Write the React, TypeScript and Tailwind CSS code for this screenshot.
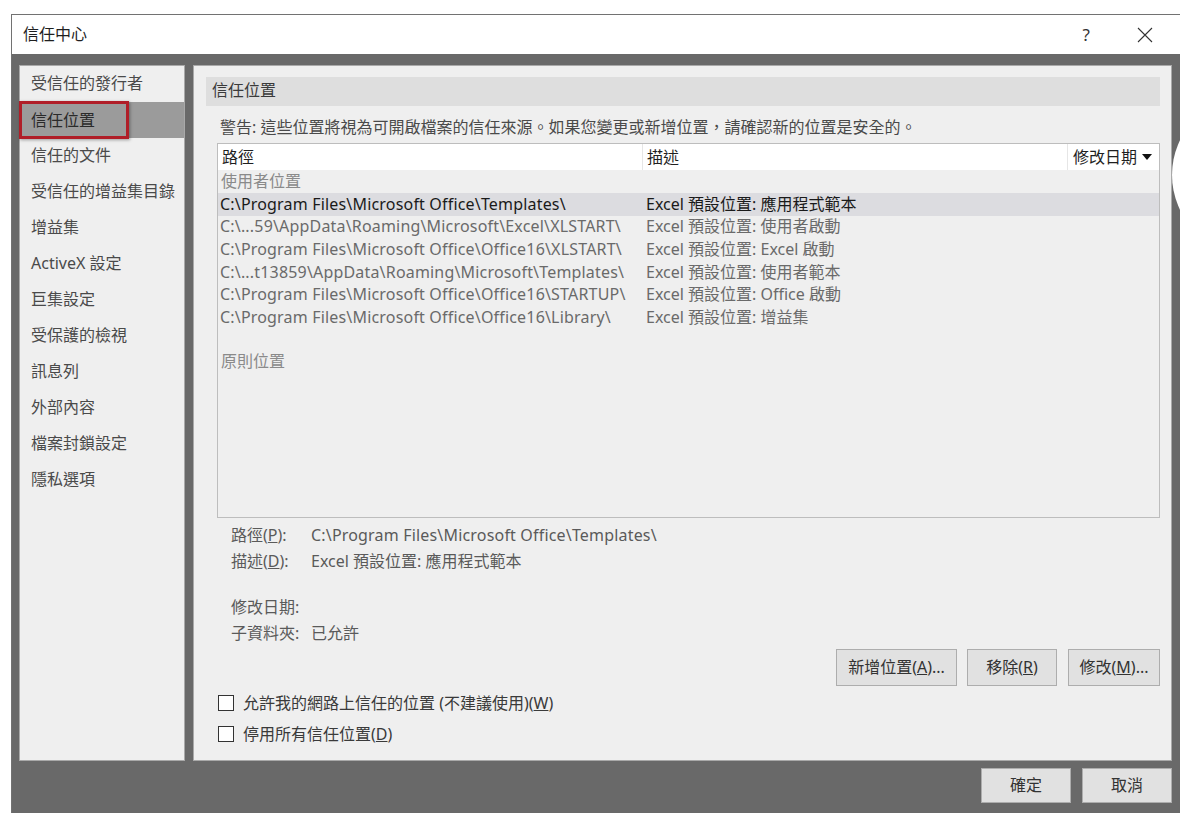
import React from 'react';

const navItems = [
  '受信任的發行者',
  '信任位置',
  '信任的文件',
  '受信任的增益集目錄',
  '增益集',
  'ActiveX 設定',
  '巨集設定',
  '受保護的檢視',
  '訊息列',
  '外部內容',
  '檔案封鎖設定',
  '隱私選項',
];

const userLocations = [
  ['C:\\Program Files\\Microsoft Office\\Templates\\', 'Excel 預設位置: 應用程式範本'],
  ['C:\\...59\\AppData\\Roaming\\Microsoft\\Excel\\XLSTART\\', 'Excel 預設位置: 使用者啟動'],
  ['C:\\Program Files\\Microsoft Office\\Office16\\XLSTART\\', 'Excel 預設位置: Excel 啟動'],
  ['C:\\...t13859\\AppData\\Roaming\\Microsoft\\Templates\\', 'Excel 預設位置: 使用者範本'],
  ['C:\\Program Files\\Microsoft Office\\Office16\\STARTUP\\', 'Excel 預設位置: Office 啟動'],
  ['C:\\Program Files\\Microsoft Office\\Office16\\Library\\', 'Excel 預設位置: 增益集'],
];

function Checkbox({ children }: { children: React.ReactNode }) {
  return (
    <div className="flex items-center h-[20px] ml-[24px]">
      <div className="w-[16px] h-[16px] border border-[#333333] bg-white" />
      <span className="ml-[9px] -mt-[1px] text-[#3a3a3a]">{children}</span>
    </div>
  );
}

function GreyButton({ children, className = '' }: { children: React.ReactNode; className?: string }) {
  return (
    <button className={`flex items-center justify-center bg-[#e1e1e1] border border-[#adadad] text-[#333333] pb-[1px] ${className}`}>
      {children}
    </button>
  );
}

export default function App() {
  return (
    <div className="w-[1180px] h-[817px] bg-white overflow-hidden relative font-['Noto_Sans','Noto_Sans_CJK_TC',sans-serif] text-[16px] leading-none">
      <div className="mt-[14px] ml-[11px] w-[1169px] border-t border-l border-[#727272] flex flex-col">
        {/* Title bar */}
        <div className="h-[39px] bg-white flex items-center pl-[11px] pr-[22px]">
          <span className="text-[#1f1f1f] -mt-[1px]">信任中心</span>
          <div className="flex-1" />
          <span className="text-[#333333] text-[17px] mr-[47px]">?</span>
          <svg width="16" height="16" viewBox="0 0 16 16" className="mr-[5px]">
            <path d="M1 1 L15 15 M15 1 L1 15" stroke="#333" strokeWidth="1.1" fill="none" />
          </svg>
        </div>

        {/* Body */}
        <div className="bg-[#696969] pt-[11px] pl-[7px] pr-[8px] pb-[10px] flex flex-col">
          <div className="flex gap-[8px] h-[696px]">
            {/* Left nav */}
            <div className="w-[166px] bg-[#efefef] border border-[#a9a9a9] flex flex-col">
              {navItems.map((item) =>
                item === '信任位置' ? (
                  <div key={item} className="h-[36px] bg-[#9b9b9b] flex items-center">
                    <div className="w-[110px] h-[38px] -ml-[1px] border-[3px] border-[#b01e28] shadow-[1px_1px_3px_rgba(0,0,0,0.35)] flex items-center pl-[9px] text-[#2a2a2a]">
                      {item}
                    </div>
                  </div>
                ) : (
                  <div key={item} className="h-[36px] flex items-center pl-[11px] pb-[2px] text-[#4a4a4a]">
                    {item}
                  </div>
                )
              )}
            </div>

            {/* Right content */}
            <div className="flex-1 bg-[#efefef] border border-[#a9a9a9] flex flex-col">
              <div className="mt-[11px] ml-[12px] mr-[11px] h-[29px] bg-[#dedede] flex items-center pl-[6px] pb-[3px] text-[#3a3a3a]">
                信任位置
              </div>
              <div className="mt-[10px] h-[22px] ml-[26px] flex items-center pb-[1px] text-[#4a4a4a]">
                警告: 這些位置將視為可開啟檔案的信任來源。如果您變更或新增位置，請確認新的位置是安全的。
              </div>

              {/* Table */}
              <div className="mt-[5px] ml-[23px] mr-[11px] h-[375px] border border-[#bdbdbd] bg-[#efefef] flex flex-col">
                <div className="h-[26px] bg-white flex">
                  <div className="w-[425px] border-r border-[#e6e6e6] flex items-center pl-[4px] pb-[1px] text-[#1f1f1f]">路徑</div>
                  <div className="w-[425px] border-r border-[#e6e6e6] flex items-center pl-[4px] pb-[1px] text-[#1f1f1f]">描述</div>
                  <div className="flex-1 flex items-center pl-[5px] pb-[1px] text-[#1f1f1f]">
                    修改日期
                    <svg width="10" height="6" viewBox="0 0 10 6" className="ml-[5px]">
                      <path d="M0 0 L10 0 L5 6 Z" fill="#111" />
                    </svg>
                  </div>
                </div>
                <div className="h-[23px] flex items-center pl-[3px] pb-[1px] text-[#8a8a8a]">使用者位置</div>
                {userLocations.map(([path, desc], i) => (
                  <div
                    key={path}
                    className={`h-[22.6px] flex items-center pb-[1px] ${i === 0 ? 'bg-[#dcdce0] text-[#1a1a1a]' : 'text-[#6a6a6a]'}`}
                  >
                    <div className="w-[426px] pl-[2px] whitespace-nowrap tracking-[0.18px]">{path}</div>
                    <div className="pl-[2px] whitespace-nowrap">{desc}</div>
                  </div>
                ))}
                <div className="h-[22px]" />
                <div className="h-[22px] flex items-center pl-[3px] pb-[1px] text-[#8a8a8a]">原則位置</div>
              </div>

              {/* Details */}
              <div className="mt-[4px] ml-[37px] flex flex-col text-[#5a5a5a]">
                <div className="h-[26px] flex items-center">
                  <span className="w-[80px]">路徑(<span className="underline">P</span>):</span>
                  <span className="tracking-[0.18px]">C:\Program Files\Microsoft Office\Templates\</span>
                </div>
                <div className="h-[26px] flex items-center">
                  <span className="w-[80px]">描述(<span className="underline">D</span>):</span>
                  <span>Excel 預設位置: 應用程式範本</span>
                </div>
                <div className="h-[26px] mt-[20px] flex items-center">
                  <span className="w-[80px]">修改日期:</span>
                </div>
                <div className="h-[26px] flex items-center">
                  <span className="w-[80px]">子資料夾:</span>
                  <span>已允許</span>
                </div>
              </div>

              <div className="mt-[3px] mr-[11px] flex justify-end">
                <GreyButton className="w-[121px] h-[37px]">新增位置(<span className="underline">A</span>)...</GreyButton>
                <GreyButton className="w-[90px] h-[37px] ml-[10px]">移除(<span className="underline">R</span>)</GreyButton>
                <GreyButton className="w-[92px] h-[37px] ml-[11px]">修改(<span className="underline">M</span>)...</GreyButton>
              </div>

              <div className="mt-[7px] flex flex-col gap-[11px]">
                <Checkbox>
                  允許我的網路上信任的位置 (不建議使用)(<span className="underline">W</span>)
                </Checkbox>
                <Checkbox>
                  停用所有信任位置(<span className="underline">D</span>)
                </Checkbox>
              </div>
            </div>
          </div>

          {/* Bottom buttons */}
          <div className="mt-[7px] flex justify-end gap-[11px]">
            <GreyButton className="w-[90px] h-[35px]">確定</GreyButton>
            <GreyButton className="w-[90px] h-[35px]">取消</GreyButton>
          </div>
        </div>
      </div>

      {/* edge overlay */}
      <div className="absolute left-[1172px] top-[95px] w-[160px] h-[160px] rounded-full bg-white" />
    </div>
  );
}
